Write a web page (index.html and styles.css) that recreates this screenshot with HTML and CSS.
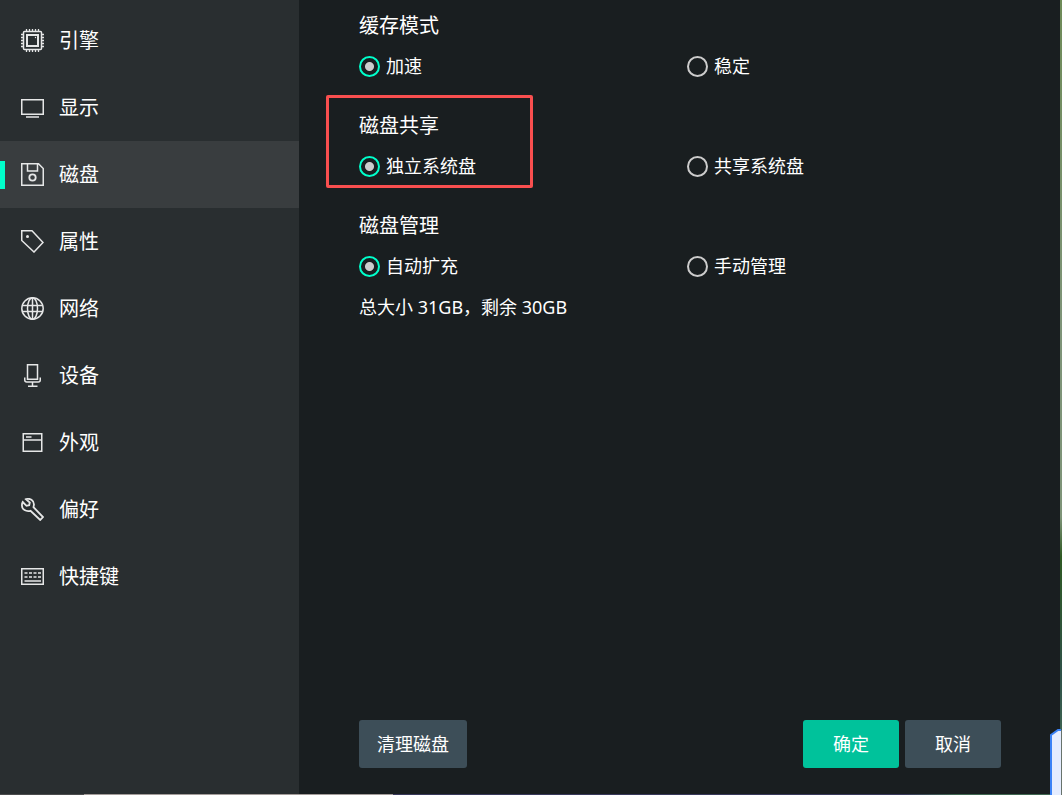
FILE: index.html
```html
<!DOCTYPE html>
<html lang="zh-CN">
<head>
<meta charset="utf-8">
<meta name="viewport" content="width=device-width, initial-scale=1">
<title>设置</title>
<link rel="stylesheet" href="styles.css">
</head>
<body>
<div class="window">
  <nav class="sidebar">
    <button type="button" class="nav-item">
      <svg class="icon" viewBox="0 0 23 23"><rect x="2.500" y="2.500" width="18" height="18" rx="1"/><rect x="6" y="6" width="11" height="11" stroke-width="2"/><circle cx="14.500" cy="8.500" r=".7" class="solid"/><path d="M5.500 0v2M8.500 0v2M11.500 0v2M14.500 0v2M17.500 0v2M5.500 21v2M8.500 21v2M11.500 21v2M14.500 21v2M17.500 21v2M0 5.500h2M0 8.500h2M0 11.500h2M0 14.500h2M0 17.500h2M21 5.500h2M21 8.500h2M21 11.500h2M21 14.500h2M21 17.500h2" stroke-width="1.300"/></svg>
      <span>引擎</span>
    </button>
    <button type="button" class="nav-item">
      <svg class="icon" viewBox="0 0 23 23"><rect x=".75" y="3.750" width="21.500" height="14.500"/><path d="M5 21h13" stroke-width="2" opacity=".75"/></svg>
      <span>显示</span>
    </button>
    <button type="button" class="nav-item active" aria-current="page">
      <svg class="icon" viewBox="0 0 23 23"><path d="M.75.75H17.500L22.250 5.500V22.250H.75zM6.500.75V8h10V.75"/><circle cx="11.500" cy="14.500" r="3.200" stroke-width="1.800"/></svg>
      <span>磁盘</span>
    </button>
    <button type="button" class="nav-item">
      <svg class="icon" viewBox="0 0 23 23"><path d="M.75.75H11L22 12.500 13 22 .75 10.500z"/><circle cx="6.500" cy="6.500" r="1.500" class="solid"/></svg>
      <span>属性</span>
    </button>
    <button type="button" class="nav-item">
      <svg class="icon" viewBox="0 0 23 23"><circle cx="11.500" cy="11.500" r="10.700"/><ellipse cx="11.500" cy="11.500" rx="5" ry="10.700"/><path d="M11.500 1v21M1.500 8.500h20M1.500 14.500h20"/></svg>
      <span>网络</span>
    </button>
    <button type="button" class="nav-item">
      <svg class="icon" viewBox="0 0 23 23"><rect x="6.500" y=".75" width="10" height="14.500"/><path d="M3.750 13.500v2.500q0 2 2 2h11.500q2 0 2-2v-2.500M11.500 18v4M7 22.250h9.500"/></svg>
      <span>设备</span>
    </button>
    <button type="button" class="nav-item">
      <svg class="icon" viewBox="0 0 23 23"><path d="M2.250 2.750h18.500v17.500H2.250zM2.250 9h18.500M5 6h5.500"/></svg>
      <span>外观</span>
    </button>
    <button type="button" class="nav-item">
      <svg class="icon" viewBox="0 0 23 23"><path d="M1.700 4L5.500 7.800 8.200 7.200 8.800 4.500 5 1.200C9-.3 13 2.500 13 6.500L12.500 9.200 22 19 19.200 22 9.500 12.800C5 14 .9 11.500.9 7.500Q.9 5.500 1.700 4z" stroke-width="1.800"/></svg>
      <span>偏好</span>
    </button>
    <button type="button" class="nav-item">
      <svg class="icon" viewBox="0 0 23 23"><rect x=".75" y="3.750" width="21.500" height="15.500"/><path d="M3.500 8h3M8 8h3M12.500 8h3M17 8h3M3.500 12h3M8 12h3M12.500 12h3M17 12h3M3.500 16h16.500" stroke-width="1.700"/></svg>
      <span>快捷键</span>
    </button>
  </nav>
  <main class="panel">
    <form class="settings">
      <fieldset class="group">
        <legend class="title">缓存模式</legend>
        <div class="options">
          <label class="option"><input class="radio" type="radio" name="cache" checked>加速</label>
          <label class="option"><input class="radio" type="radio" name="cache">稳定</label>
        </div>
      </fieldset>
      <div class="highlighted">
        <fieldset class="group">
          <legend class="title">磁盘共享</legend>
          <div class="options">
            <label class="option"><input class="radio" type="radio" name="share" checked>独立系统盘</label>
            <label class="option"><input class="radio" type="radio" name="share">共享系统盘</label>
          </div>
        </fieldset>
      </div>
      <fieldset class="group">
        <legend class="title">磁盘管理</legend>
        <div class="options">
          <label class="option"><input class="radio" type="radio" name="manage" checked>自动扩充</label>
          <label class="option"><input class="radio" type="radio" name="manage">手动管理</label>
        </div>
        <p class="usage">总大小 31GB，剩余 30GB</p>
      </fieldset>
    </form>
    <footer class="actions">
      <button type="button" class="btn wide">清理磁盘</button>
      <button type="button" class="btn primary">确定</button>
      <button type="button" class="btn">取消</button>
    </footer>
  </main>
  <svg class="side-tab" viewBox="0 0 12 66"><path d="M1 67V6L8 1h3v66" fill="#e4ecff"/><path d="M1 67V6L8 1h3" fill="none" stroke="#3b82f6" stroke-width="2"/><path d="M11.500 1v65" stroke="#68736c"/></svg>
</div>
</body>
</html>
```

FILE: styles.css
```css
*, *::before, *::after { box-sizing: border-box; }

body {
  margin: 0;
  background: linear-gradient(#6e8b58, #7e9478 40%, #7e9478 65%, #2f5a24 70%, #2f5148 85%, #4f7a5e);
  color: #fff;
  font-family: "Noto Sans", "Noto Sans CJK SC", sans-serif;
  font-size: 18px;
  font-weight: 400;
  line-height: 30px;
}

button, input { font: inherit; color: inherit; }

.window {
  position: relative;
  display: grid;
  grid-template-columns: 299px 1fr;
  min-height: 100vh;
  border: 0 solid;
  border-bottom-width: 1px;
  border-image: linear-gradient(90deg, #4a4b4c 8%, #a39c9a 8%, #a39c9a 37%, #38385a 37%, #38385a 85%, #3f6650 90%) 1;
}

.sidebar {
  display: flex;
  flex-direction: column;
  padding-top: 7px;
  background: #292e30;
}

.nav-item {
  display: flex;
  align-items: center;
  gap: 15px;
  height: 67px;
  padding: 0 21px;
  border: 0;
  background: none;
  font-size: 20px;
  text-align: left;
}

.nav-item.active {
  background: linear-gradient(#00ffcb, #00ffcb) 0 50% / 5px 28px no-repeat #393d3f;
}

.icon {
  width: 23px;
  height: 23px;
  fill: none;
  stroke: #e6e7e7;
  stroke-width: 1.5;
}

.icon .solid { fill: #e6e7e7; stroke: none; }

.panel {
  display: flex;
  flex-direction: column;
  justify-content: space-between;
  margin-right: 2px;
  padding: 11px 59px 26px 60px;
  background: #191e20;
}

.settings {
  display: flex;
  flex-direction: column;
  gap: 29px;
}

.group {
  min-width: 0;
  margin: 0;
  padding: 0;
  border: 0;
}

.highlighted { position: relative; }

.highlighted::after {
  content: "";
  position: absolute;
  top: -16px;
  left: -33px;
  width: 207px;
  height: 93px;
  border: 3px solid #f94f4f;
  border-radius: 2px;
  pointer-events: none;
}

.title {
  padding: 0;
  margin-bottom: 10px;
  font-size: 20px;
}

.options {
  display: grid;
  grid-template-columns: 1fr 1fr;
  gap: 14px;
  padding-bottom: 1px;
}

.option {
  display: flex;
  align-items: center;
  gap: 6px;
}

.radio {
  appearance: none;
  width: 21px;
  height: 21px;
  margin: 0;
  border: 2px solid #ccc;
  border-radius: 50%;
}

.radio:checked {
  border-color: #00ffcb;
  background: radial-gradient(circle, #ccc 4px, transparent 5px);
}

.usage { margin: 10px 0 0; }

.actions {
  display: flex;
  gap: 6px;
}

.btn {
  width: 96px;
  height: 48px;
  padding: 0;
  border: 0;
  border-radius: 3px;
  background: #3d4e58;
}

.btn.wide { width: 108px; margin-right: auto; }

.btn.primary { background: #00c29b; }

.side-tab {
  position: absolute;
  right: 0;
  bottom: -1px;
  width: 12px;
  height: 66px;
}
```
